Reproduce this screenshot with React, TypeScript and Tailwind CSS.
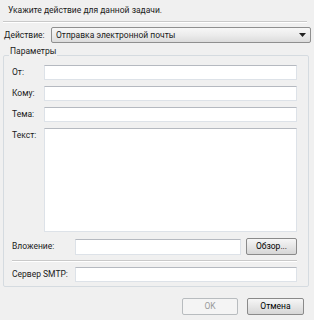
function Field({ label, className = "h-[15px]" }: { label: string; className?: string }) {
  return (
    <div className="flex items-start">
      <div className="w-[32px] shrink-0 leading-[15px]">{label}</div>
      <div className={`flex-1 bg-white border border-[#dde2e8] border-t-[#b5b9c0] ${className}`} />
    </div>
  );
}

function Button({ label, disabled = false, width }: { label: string; disabled?: boolean; width: string }) {
  return (
    <div
      className={`h-[17px] ${width} rounded-[2px] border flex items-center justify-center leading-none ${
        disabled
          ? "border-[#b8bcbf] bg-[#f4f4f4] text-[#9a9a9a]"
          : "border-[#8a8a8a] bg-gradient-to-b from-[#f6f6f6] via-[#e6e6e6] to-[#d6d6d6] text-black"
      }`}
    >
      {label}
    </div>
  );
}

export default function App() {
  return (
    <div className="w-[314px] h-[320px] bg-[#f0f0f0] text-[8.5px] text-[#1a1a1a] font-['Roboto',sans-serif] flex flex-col overflow-hidden whitespace-nowrap">
      <div className="shrink-0 h-[21px] pl-[8px] pt-[4px] leading-[12px]">Укажите действие для данной задачи.</div>
      <div className="shrink-0 ml-[3px] mr-[7px] border-t border-[#c9c9c9] border-b border-b-white" />

      <div className="shrink-0 flex items-center mt-[4px] pl-[4px] pr-[3px]">
        <div className="w-[47px] shrink-0">Действие:</div>
        <div className="flex-1 h-[16px] rounded-[2px] border border-[#8f8f8f] bg-gradient-to-b from-[#f7f7f7] via-[#ececec] to-[#dcdcdc] flex items-center px-[4px]">
          <span className="flex-1">Отправка электронной почты</span>
          <svg width="7" height="4" viewBox="0 0 7 4">
            <path d="M0 0h7L3.5 4z" fill="#222" />
          </svg>
        </div>
      </div>

      <fieldset className="shrink-0 ml-[3px] mr-[5px] mt-[2px] border border-[#d5dbe0] rounded-[2px]">
        <legend className="ml-[5px] px-[1px] pb-[8px] leading-[12px]">Параметры</legend>
        <div className="pl-[8px] pr-[11px] pb-[4px] flex flex-col">
          <div className="flex flex-col gap-[6px]">
            <Field label="От:" />
            <Field label="Кому:" />
            <Field label="Тема:" />
            <Field label="Текст:" className="h-[104px]" />
          </div>

          <div className="flex items-center mt-[6px]">
            <div className="w-[63px] shrink-0">Вложение:</div>
            <div className="flex-1 h-[16px] bg-white border border-[#dde2e8] border-t-[#b5b9c0]" />
            <div className="ml-[5px]">
              <Button label="Обзор..." width="w-[51px]" />
            </div>
          </div>

          <div className="mt-[5px] border-t border-[#c9c9c9] border-b border-b-white" />

          <div className="flex items-center mt-[5px]">
            <div className="w-[63px] shrink-0">Сервер SMTP:</div>
            <div className="flex-1 h-[15px] bg-white border border-[#dde2e8] border-t-[#b5b9c0]" />
          </div>
        </div>
      </fieldset>

      <div className="shrink-0 flex justify-end gap-[9px] pr-[10px] mt-[11px]">
        <Button label="OK" disabled width="w-[56px]" />
        <Button label="Отмена" width="w-[57px]" />
      </div>
    </div>
  );
}
